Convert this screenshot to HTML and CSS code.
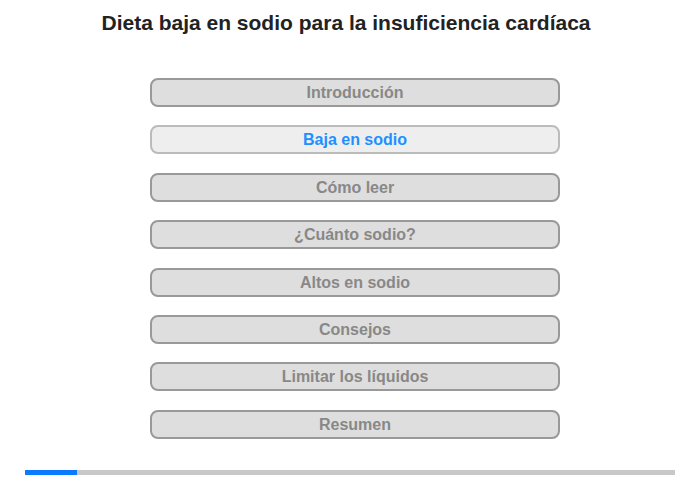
FILE: index.html
```html
<!DOCTYPE html>
<html lang="es">
<head>
    <meta charset="UTF-8">
    <title>Dieta baja en sodio</title>
    <link rel="stylesheet" href="styles.css">
</head>
<body>
    <div class="page">
        <div class="title">Dieta baja en sodio para la insuficiencia cardíaca</div>
        <div class="menu">
            <div class="item">Introducción</div>
            <div class="item active">Baja en sodio</div>
            <div class="item">Cómo leer</div>
            <div class="item">¿Cuánto sodio?</div>
            <div class="item">Altos en sodio</div>
            <div class="item">Consejos</div>
            <div class="item">Limitar los líquidos</div>
            <div class="item">Resumen</div>
        </div>
        <div class="progress">
            <div class="progress-fill" style="width: 8%"></div>
        </div>
    </div>
</body>
</html>
```

FILE: styles.css
```css
* {
    margin: 0;
    padding: 0;
    box-sizing: border-box;
}
body {
    font-family: "Liberation Sans", Arial, sans-serif;
    background: #fff;
}
.page {
    width: 700px;
    height: 480px;
    display: flex;
    flex-direction: column;
    align-items: center;
}
.title {
    font-size: 21px;
    font-weight: bold;
    color: #222;
    margin-top: 10px;
    margin-right: 8px;
    line-height: 25px;
    text-align: center;
}
.menu {
    display: flex;
    flex-direction: column;
    gap: 18.4px;
    margin-top: 43px;
    margin-left: 10px;
    width: 410px;
}
.item {
    height: 29px;
    border: 2px solid #999;
    border-radius: 8px;
    background: #dedede;
    color: #888;
    font-size: 16px;
    font-weight: bold;
    text-align: center;
    line-height: 25px;
}
.item.active {
    background: #eee;
    border-color: #bbb;
    color: #1e90ff;
}
.progress {
    margin-top: 31px;
    width: 650px;
    height: 5px;
    background: #c8c8c8;
}
.progress-fill {
    height: 100%;
    background: #0a7bff;
}
```
